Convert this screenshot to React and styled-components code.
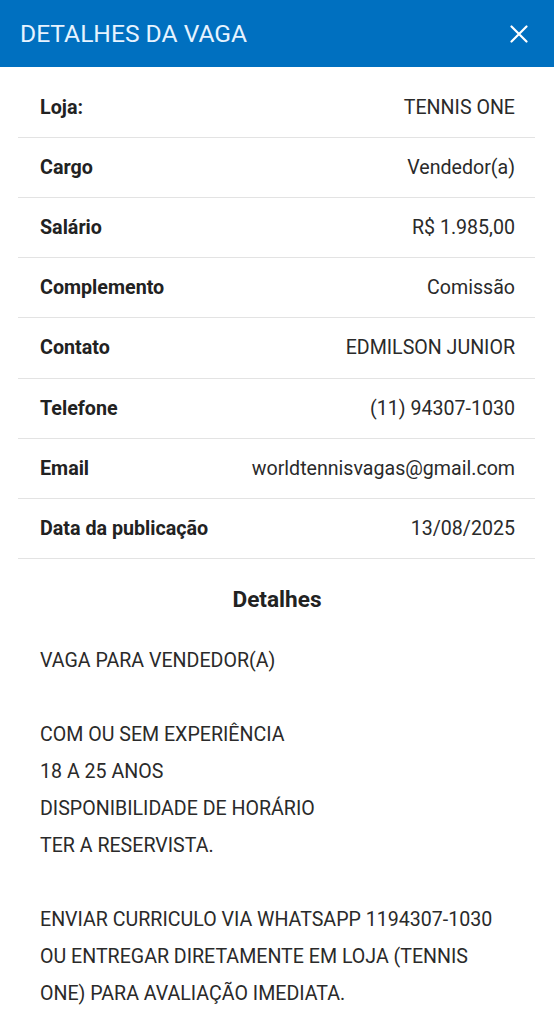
import React from "react";
import styled, { createGlobalStyle } from "styled-components";

const Global = createGlobalStyle`
  html, body { margin: 0; padding: 0; background: #fff; }
  body { font-family: Roboto, "Noto Sans", sans-serif; -webkit-font-smoothing: antialiased; }
`;

const Page = styled.div`
  width: 554px;
  min-height: 1024px;
  background: #fff;
`;

const Header = styled.header`
  height: 67px;
  background: #0070c0;
  display: flex;
  align-items: center;
  justify-content: space-between;
  padding: 0 20px;
  box-sizing: border-box;
`;

const Title = styled.h1`
  margin: 0;
  font-size: 24.6px;
  font-weight: 400;
  color: #e6f3ff;
  letter-spacing: 0;
`;

const CloseButton = styled.button`
  border: 0;
  background: none;
  padding: 0;
  width: 30px;
  height: 30px;
  display: flex;
  align-items: center;
  justify-content: center;
  cursor: pointer;
`;

const Table = styled.div`
  margin: 10.85px 19px 0 18px;
`;

const Row = styled.div`
  height: 59.15px;
  display: flex;
  align-items: center;
  justify-content: space-between;
  padding: 0 20px 0 22px;
  border-bottom: 1px solid #e3e3e3;
`;

const Label = styled.span`
  font-size: 19.7px;
  font-weight: 700;
  color: #222;
`;

const Value = styled.span`
  font-size: 19.6px;
  color: #2a2a2a;
`;

const SectionTitle = styled.h2`
  margin: 23px 0 0;
  text-align: center;
  font-size: 22.6px;
  font-weight: 700;
  color: #222;
  line-height: 36px;
`;

const Body = styled.p`
  margin: 24.5px 0 0 40px;
  font-size: 19.6px;
  line-height: 37px;
  color: #2a2a2a;
  white-space: pre-line;
`;

const rows = [
  ["Loja:", "TENNIS ONE"],
  ["Cargo", "Vendedor(a)"],
  ["Salário", "R$ 1.985,00"],
  ["Complemento", "Comissão"],
  ["Contato", "EDMILSON JUNIOR"],
  ["Telefone", "(11) 94307-1030"],
  ["Email", "worldtennisvagas@gmail.com"],
  ["Data da publicação", "13/08/2025"],
];

const text = `VAGA PARA VENDEDOR(A)

COM OU SEM EXPERIÊNCIA
18 A 25 ANOS
DISPONIBILIDADE DE HORÁRIO
TER A RESERVISTA.

ENVIAR CURRICULO VIA WHATSAPP 1194307-1030
OU ENTREGAR DIRETAMENTE EM LOJA (TENNIS
ONE) PARA AVALIAÇÃO IMEDIATA.`;

export default function App() {
  return (
    <Page>
      <Global />
      <Header>
        <Title>DETALHES DA VAGA</Title>
        <CloseButton aria-label="Fechar">
          <svg width="18" height="18" viewBox="0 0 18 18">
            <path d="M1.5 1.5L16.5 16.5M16.5 1.5L1.5 16.5" stroke="#fff" strokeWidth="2.2" strokeLinecap="round" />
          </svg>
        </CloseButton>
      </Header>
      <Table>
        {rows.map(([l, v]) => (
          <Row key={l}>
            <Label>{l}</Label>
            <Value>{v}</Value>
          </Row>
        ))}
      </Table>
      <SectionTitle>Detalhes</SectionTitle>
      <Body>{text}</Body>
    </Page>
  );
}
